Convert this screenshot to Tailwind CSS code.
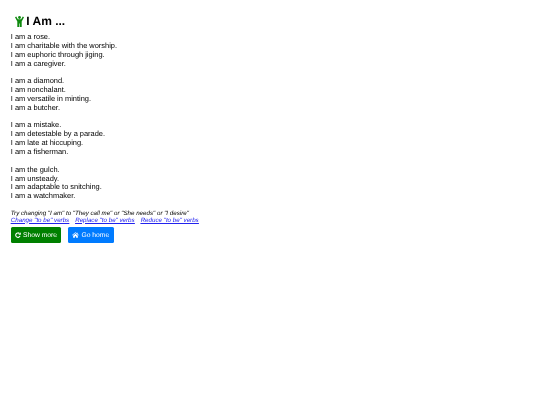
<!DOCTYPE html>
<html lang="en">
<head>
    <meta charset="UTF-8">
    <title>I Am</title>
    <script src="https://cdn.jsdelivr.net/npm/@tailwindcss/browser@4"></script>
</head>
<body class="bg-white text-[#000] font-['Liberation_Sans',Arial,sans-serif] [text-rendering:geometricPrecision]">
    <div class="px-[10.8px] pt-[13px] transform-gpu">
        <!-- Heading -->
        <h1 class="flex items-center h-[16px] pl-[4px] text-[12px] leading-[16px] font-bold">
            <svg class="w-[9px] h-[11px] mr-[2.5px]" viewBox="0 0 9 11" fill="#0f8a0f">
                <circle cx="4.5" cy="1.5" r="1.4"/>
                <path d="M0 1.2 L1.2 0.4 L2.9 3.2 L6.1 3.2 L7.8 0.4 L9 1.2 L6.7 5.4 L6.7 11 L4.8 11 L4.8 7.6 L4.2 7.6 L4.2 11 L2.3 11 L2.3 5.4 Z"/>
            </svg>
            <span>I Am ...</span>
        </h1>

        <!-- Poem -->
        <div class="mt-[4px] text-[7.45px] leading-[8.85px]">
            <p>I am a rose.<br>I am charitable with the worship.<br>I am euphoric through jiging.<br>I am a caregiver.</p>
            <p class="mt-[8.85px]">I am a diamond.<br>I am nonchalant.<br>I am versatile in minting.<br>I am a butcher.</p>
            <p class="mt-[8.85px]">I am a mistake.<br>I am detestable by a parade.<br>I am late at hiccuping.<br>I am a fisherman.</p>
            <p class="mt-[8.85px]">I am the gulch.<br>I am unsteady.<br>I am adaptable to snitching.<br>I am a watchmaker.</p>
        </div>

        <!-- Tips -->
        <div class="mt-[8.5px] text-[6.2px] leading-[7px] italic">
            <p>Try changing "I am" to "They call me" or "She needs" or "I desire"</p>
            <p class="flex gap-[6px] text-[#2222ee] underline decoration-[0.5px] underline-offset-[1px]">
                <a href="#">Change "to be" verbs</a>
                <a href="#">Replace "to be" verbs</a>
                <a href="#">Reduce "to be" verbs</a>
            </p>
        </div>

        <!-- Buttons -->
        <div class="flex gap-[6.5px] mt-[3.4px]">
            <a href="#" class="flex items-center gap-[2.2px] h-[16px] px-[4px] rounded-[1.5px] bg-[#008000] text-white text-[6.75px] leading-[12px]">
                <svg class="w-[6px] h-[6px] mt-[0.5px]" viewBox="0 0 16 16" fill="none" stroke="white" stroke-width="2.8">
                    <path d="M13.5 10.5 A6 6 0 1 1 12 4"/>
                    <path d="M15.5 0.5 V7 H9" fill="white" stroke="none"/>
                </svg>
                <span class="pt-[3px]">Show more</span>
            </a>
            <a href="#" class="flex items-center gap-[2.4px] h-[16px] px-[4.4px] rounded-[1.5px] bg-[#007bff] text-white text-[6.75px] leading-[12px]">
                <svg class="w-[7px] h-[6px] mt-[0.5px]" viewBox="0 0 16 14" fill="white">
                    <path d="M8 0.5 L11 3 V1.5 H13 V4.7 L16 7.2 L15 8.3 L8 2.6 L1 8.3 L0 7.2 Z"/>
                    <path d="M8 4 L13.5 8.5 V13.5 H9.5 V10 H6.5 V13.5 H2.5 V8.5 Z"/>
                </svg>
                <span class="pt-[3px]">Go home</span>
            </a>
        </div>
    </div>
</body>
</html>
